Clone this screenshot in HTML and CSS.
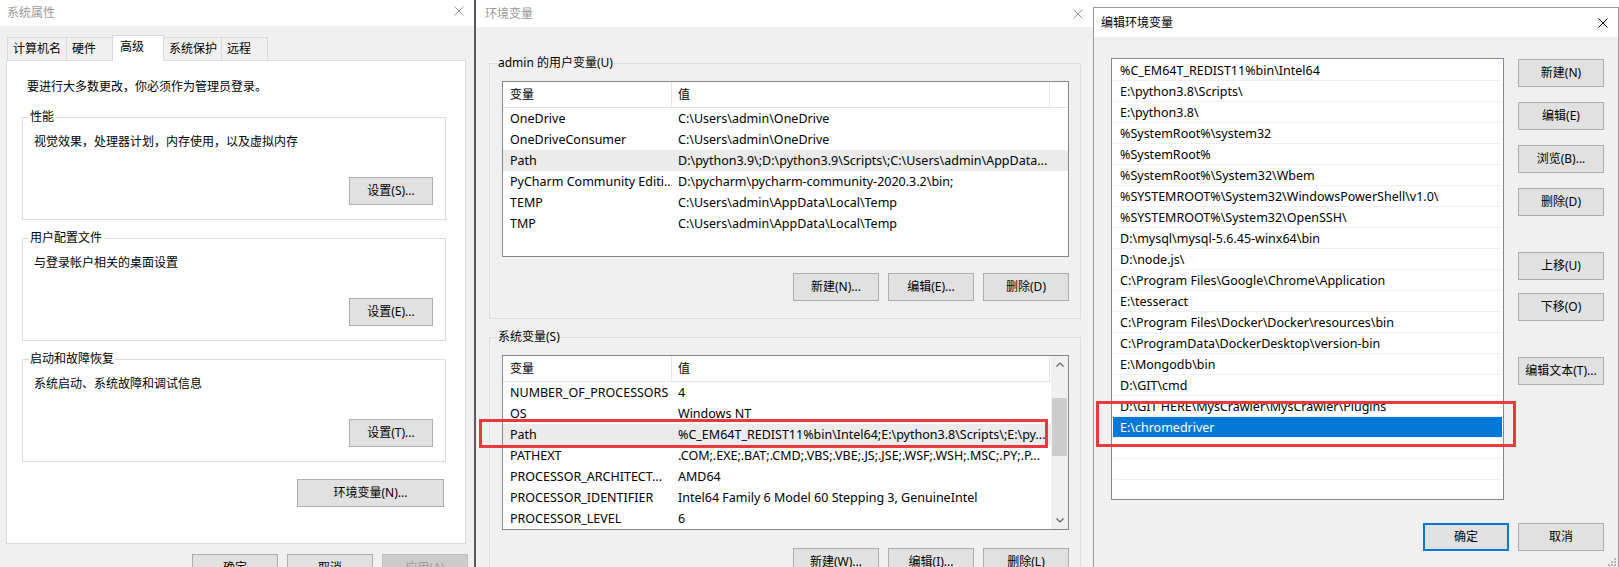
FILE: index.html
```html
<!DOCTYPE html>
<html lang="zh-CN">
<head>
    <meta charset="UTF-8">
    <meta name="viewport" content="width=device-width, initial-scale=1.0">
    <title>环境变量</title>
    <link rel="stylesheet" href="styles.css">
</head>
<body>
<div class="desktop">

    <!-- 系统属性 -->
    <div class="window win-sys">
        <div class="titlebar inactive">
            <span>系统属性</span>
            <svg class="close close-up" viewBox="0 0 10 10"><path d="M0.5 0.5L9.5 9.5M9.5 0.5L0.5 9.5" stroke="currentColor" stroke-width="1" fill="none"/></svg>
        </div>
        <div class="sys-body">
            <div class="tabs">
                <div class="tab" style="width:60px">计算机名</div>
                <div class="tab" style="width:47px">硬件</div>
                <div class="tab active" style="width:52px">高级</div>
                <div class="tab" style="width:59px">系统保护</div>
                <div class="tab" style="width:47px">远程</div>
            </div>
            <div class="tab-panel">
                <p class="intro">要进行大多数更改，你必须作为管理员登录。</p>

                <div class="group">
                    <div class="group-title">性能</div>
                    <p class="group-desc">视觉效果，处理器计划，内存使用，以及虚拟内存</p>
                    <div class="group-actions"><button class="btn btn-narrow">设置(S)...</button></div>
                </div>

                <div class="group">
                    <div class="group-title">用户配置文件</div>
                    <p class="group-desc">与登录帐户相关的桌面设置</p>
                    <div class="group-actions"><button class="btn btn-narrow">设置(E)...</button></div>
                </div>

                <div class="group">
                    <div class="group-title">启动和故障恢复</div>
                    <p class="group-desc">系统启动、系统故障和调试信息</p>
                    <div class="group-actions"><button class="btn btn-narrow">设置(T)...</button></div>
                </div>

                <div class="panel-actions"><button class="btn btn-env">环境变量(N)...</button></div>
            </div>
            <div class="dlg-actions">
                <button class="btn">确定</button>
                <button class="btn">取消</button>
                <button class="btn" disabled>应用(A)</button>
            </div>
        </div>
    </div>

    <!-- 环境变量 -->
    <div class="window win-env">
        <div class="titlebar inactive">
            <span>环境变量</span>
            <svg class="close" viewBox="0 0 10 10"><path d="M0.5 0.5L9.5 9.5M9.5 0.5L0.5 9.5" stroke="currentColor" stroke-width="1" fill="none"/></svg>
        </div>
        <div class="env-body">
            <div class="group env-group">
                <div class="group-title">admin 的用户变量(U)</div>
                <div class="list list-user">
                    <div class="list-head">
                        <div class="head-cell cell-name">变量</div>
                        <div class="head-cell cell-value">值</div>
                    </div>
                    <div class="list-row"><div class="cell-name">OneDrive</div><div class="cell-value">C:\Users\admin\OneDrive</div></div>
                    <div class="list-row"><div class="cell-name">OneDriveConsumer</div><div class="cell-value">C:\Users\admin\OneDrive</div></div>
                    <div class="list-row hot"><div class="cell-name">Path</div><div class="cell-value">D:\python3.9\;D:\python3.9\Scripts\;C:\Users\admin\AppData...</div></div>
                    <div class="list-row"><div class="cell-name">PyCharm Community Editi...</div><div class="cell-value">D:\pycharm\pycharm-community-2020.3.2\bin;</div></div>
                    <div class="list-row"><div class="cell-name">TEMP</div><div class="cell-value">C:\Users\admin\AppData\Local\Temp</div></div>
                    <div class="list-row"><div class="cell-name">TMP</div><div class="cell-value">C:\Users\admin\AppData\Local\Temp</div></div>
                </div>
                <div class="btn-row">
                    <button class="btn">新建(N)...</button>
                    <button class="btn">编辑(E)...</button>
                    <button class="btn">删除(D)</button>
                </div>
            </div>

            <div class="group env-group env-group-sys">
                <div class="group-title">系统变量(S)</div>
                <div class="list list-sys">
                    <div class="list-main">
                        <div class="list-head">
                            <div class="head-cell cell-name">变量</div>
                            <div class="head-cell cell-value">值</div>
                        </div>
                        <div class="list-row"><div class="cell-name">NUMBER_OF_PROCESSORS</div><div class="cell-value">4</div></div>
                        <div class="list-row"><div class="cell-name">OS</div><div class="cell-value">Windows NT</div></div>
                        <div class="list-row hot"><div class="cell-name">Path</div><div class="cell-value">%C_EM64T_REDIST11%bin\Intel64;E:\python3.8\Scripts\;E:\py...</div></div>
                        <div class="list-row"><div class="cell-name">PATHEXT</div><div class="cell-value">.COM;.EXE;.BAT;.CMD;.VBS;.VBE;.JS;.JSE;.WSF;.WSH;.MSC;.PY;.P...</div></div>
                        <div class="list-row"><div class="cell-name">PROCESSOR_ARCHITECT...</div><div class="cell-value">AMD64</div></div>
                        <div class="list-row"><div class="cell-name">PROCESSOR_IDENTIFIER</div><div class="cell-value">Intel64 Family 6 Model 60 Stepping 3, GenuineIntel</div></div>
                        <div class="list-row"><div class="cell-name">PROCESSOR_LEVEL</div><div class="cell-value">6</div></div>
                    </div>
                    <div class="scrollbar">
                        <div class="sb-btn"><svg width="8" height="5" viewBox="0 0 8 5"><path d="M0.5 4.5L4 1L7.5 4.5" stroke="#606060" stroke-width="1.2" fill="none"/></svg></div>
                        <div class="sb-thumb"></div>
                        <div class="sb-track"></div>
                        <div class="sb-btn"><svg width="8" height="5" viewBox="0 0 8 5"><path d="M0.5 0.5L4 4L7.5 0.5" stroke="#606060" stroke-width="1.2" fill="none"/></svg></div>
                    </div>
                </div>
                <div class="btn-row">
                    <button class="btn">新建(W)...</button>
                    <button class="btn">编辑(I)...</button>
                    <button class="btn">删除(L)</button>
                </div>
            </div>
        </div>
    </div>

    <!-- 编辑环境变量 -->
    <div class="window win-edit">
        <div class="titlebar">
            <span>编辑环境变量</span>
            <svg class="close" viewBox="0 0 10 10"><path d="M0.5 0.5L9.5 9.5M9.5 0.5L0.5 9.5" stroke="currentColor" stroke-width="1" fill="none"/></svg>
        </div>
        <div class="edit-body">
            <div class="edit-main">
                <div class="path-list">
                    <div class="path-row">%C_EM64T_REDIST11%bin\Intel64</div>
                    <div class="path-row">E:\python3.8\Scripts\</div>
                    <div class="path-row">E:\python3.8\</div>
                    <div class="path-row">%SystemRoot%\system32</div>
                    <div class="path-row">%SystemRoot%</div>
                    <div class="path-row">%SystemRoot%\System32\Wbem</div>
                    <div class="path-row">%SYSTEMROOT%\System32\WindowsPowerShell\v1.0\</div>
                    <div class="path-row">%SYSTEMROOT%\System32\OpenSSH\</div>
                    <div class="path-row">D:\mysql\mysql-5.6.45-winx64\bin</div>
                    <div class="path-row">D:\node.js\</div>
                    <div class="path-row">C:\Program Files\Google\Chrome\Application</div>
                    <div class="path-row">E:\tesseract</div>
                    <div class="path-row">C:\Program Files\Docker\Docker\resources\bin</div>
                    <div class="path-row">C:\ProgramData\DockerDesktop\version-bin</div>
                    <div class="path-row">E:\Mongodb\bin</div>
                    <div class="path-row">D:\GIT\cmd</div>
                    <div class="path-row">D:\GIT HERE\MysCrawler\MysCrawler\Plugins</div>
                    <div class="path-row selected">E:\chromedriver</div>
                    <div class="path-row"></div>
                    <div class="path-row"></div>
                </div>
                <div class="side-buttons">
                    <button class="btn">新建(N)</button>
                    <button class="btn">编辑(E)</button>
                    <button class="btn">浏览(B)...</button>
                    <button class="btn">删除(D)</button>
                    <button class="btn sep">上移(U)</button>
                    <button class="btn tight">下移(O)</button>
                    <button class="btn sep">编辑文本(T)...</button>
                </div>
            </div>
            <div class="edit-footer">
                <button class="btn btn-default">确定</button>
                <button class="btn">取消</button>
            </div>
        </div>
        <svg class="grip" width="10" height="10" viewBox="0 0 10 10">
            <rect x="8" y="2" width="2" height="2" fill="#b4b4b4"/>
            <rect x="5" y="5" width="2" height="2" fill="#b4b4b4"/>
            <rect x="8" y="5" width="2" height="2" fill="#b4b4b4"/>
            <rect x="2" y="8" width="2" height="2" fill="#b4b4b4"/>
            <rect x="5" y="8" width="2" height="2" fill="#b4b4b4"/>
            <rect x="8" y="8" width="2" height="2" fill="#b4b4b4"/>
        </svg>
    </div>

    <!-- 红框标注 -->
    <div class="mark mark-path"></div>
    <div class="mark mark-driver"></div>
</div>
</body>
</html>
```

FILE: styles.css
```css
* {
    box-sizing: border-box;
}
html, body {
    margin: 0;
}
body {
    width: 1619px;
    height: 567px;
    overflow: hidden;
    background: #fff;
    font-family: "Noto Sans", "Noto Sans CJK SC", sans-serif;
    font-size: 12px;
    line-height: 16px;
    color: #000;
}
.desktop {
    position: relative;
    width: 1619px;
    height: 567px;
}
.window {
    position: absolute;
    background: #f0f0f0;
    overflow: hidden;
}
.win-sys {
    left: 0;
    top: 0;
    width: 474px;
    height: 600px;
}
.win-env {
    left: 474px;
    top: 0;
    width: 619px;
    height: 600px;
    border-left: 2px solid #5a5a5a;
}
.win-edit {
    left: 1093px;
    top: 7px;
    width: 526px;
    height: 561px;
    border: 1px solid #9b9b9b;
}

/* title bars */
.titlebar {
    display: flex;
    align-items: center;
    justify-content: space-between;
    height: 26px;
    padding: 0 10px 0 7px;
    background: #fff;
}
.titlebar.inactive {
    color: #9a9a9a;
}
.win-env .titlebar {
    height: 27px;
    padding-left: 9px;
}
.win-edit .titlebar {
    height: 29px;
}
.close {
    width: 10px;
    height: 10px;
    flex: none;
}
.close-up {
    margin-top: -5px;
}

/* buttons */
.btn {
    width: 86px;
    height: 28px;
    padding: 0;
    border: 1px solid #adadad;
    background: #e1e1e1;
    font: inherit;
    color: #000;
    flex: none;
}
.btn:disabled {
    background: #cccccc;
    border-color: #bfbfbf;
    color: #9d9d9d;
}
.btn-narrow {
    width: 84px;
}
.btn-env {
    width: 147px;
    margin-right: 2px;
}
.btn-default {
    border: 2px solid #0078d7;
}

/* 系统属性 */
.sys-body {
    padding: 9px 8px 0 6px;
}
.tabs {
    display: flex;
    align-items: flex-end;
    height: 25px;
    margin-left: 1px;
}
.tab {
    height: 23px;
    padding: 3px 0 0 5px;
    border: 1px solid #d9d9d9;
    border-bottom: none;
    background: #f0f0f0;
    white-space: nowrap;
}
.tab + .tab {
    margin-left: -1px;
}
.tab.active {
    position: relative;
    z-index: 1;
    height: 26px;
    margin-bottom: -1px;
    padding-left: 7px;
    background: #fff;
}
.tab-panel {
    height: 484px;
    padding: 18px 19px 0 15px;
    background: #fff;
    border: 1px solid #d9d9d9;
}
.intro {
    margin: 0;
    padding-left: 5px;
}
.group {
    border: 1px solid #dcdcdc;
    padding: 0 12px 14px 11px;
    margin-top: 18px;
}
.intro + .group {
    margin-top: 22px;
}
.group-title {
    width: fit-content;
    margin: -9px 0 0 -5px;
    padding: 0 1px;
    background: #fff;
    white-space: nowrap;
}
.group-desc {
    margin: 9px 0 0;
}
.group-actions {
    display: flex;
    justify-content: flex-end;
    margin-top: 27px;
}
.panel-actions {
    display: flex;
    justify-content: flex-end;
    margin-top: 17px;
}
.dlg-actions {
    display: flex;
    justify-content: flex-end;
    gap: 9px;
    margin: 10px -2px 0 0;
}

/* 环境变量 */
.env-body {
    padding: 36px 12px 0 13px;
}
.env-group {
    margin-top: 0;
    padding: 0 11px 17px 12px;
}
.env-group + .env-group {
    margin-top: 18px;
}
.env-group .group-title {
    background: #f0f0f0;
}
.list {
    margin-top: 10px;
    border: 1px solid #828790;
    background: #fff;
    overflow: hidden;
}
.list-user {
    height: 176px;
}
.list-sys {
    height: 175px;
    display: flex;
}
.list-main {
    flex: 1;
    min-width: 0;
    overflow: hidden;
}
.list-head {
    display: flex;
    height: 26px;
    border-bottom: 1px solid #e5e5e5;
}
.head-cell {
    line-height: 25px;
    border-right: 1px solid #e5e5e5;
}
.cell-name {
    width: 169px;
    flex: none;
    padding-left: 7px;
    overflow: hidden;
    white-space: nowrap;
}
.list-head .cell-value {
    width: 378px;
    flex: none;
}
.cell-value {
    flex: 1;
    min-width: 0;
    padding-left: 6px;
    overflow: hidden;
    white-space: nowrap;
}
.list-row {
    display: flex;
    height: 21px;
    line-height: 21px;
    font-size: 12.5px;
}
.list-row.hot {
    background: #ebebeb;
}
.scrollbar {
    width: 17px;
    flex: none;
    display: flex;
    flex-direction: column;
    background: #f0f0f0;
}
.sb-btn {
    height: 17px;
    display: flex;
    align-items: center;
    justify-content: center;
}
.sb-thumb {
    height: 58px;
    margin: 25px 1px 0;
    background: #cdcdcd;
}
.sb-track {
    flex: 1;
}
.btn-row {
    display: flex;
    justify-content: flex-end;
    gap: 9px;
    margin-top: 16px;
}
.env-group-sys .btn-row {
    margin-top: 18px;
}

/* 编辑环境变量 */
.edit-body {
    padding: 21px 14px 0 17px;
}
.edit-main {
    display: flex;
    gap: 14px;
}
.path-list {
    width: 393px;
    height: 442px;
    padding: 1px 1px 0;
    border: 1px solid #828790;
    background: #fff;
    overflow: hidden;
}
.path-row {
    height: 21px;
    padding-left: 7px;
    border-bottom: 1px solid #f0f0f0;
    line-height: 22px;
    font-size: 12.5px;
    white-space: nowrap;
    overflow: hidden;
}
.path-row.selected {
    background: #0078d7;
    color: #fff;
}
.side-buttons {
    display: flex;
    flex-direction: column;
    padding-top: 1px;
}
.side-buttons .btn + .btn {
    margin-top: 15px;
}
.side-buttons .btn.sep {
    margin-top: 36px;
}
.side-buttons .btn.tight {
    margin-top: 13px;
}
.edit-footer {
    display: flex;
    justify-content: flex-end;
    gap: 9px;
    margin-top: 23px;
}
.grip {
    position: absolute;
    right: 2px;
    bottom: 1px;
}

/* 红框标注 */
.mark {
    position: absolute;
    z-index: 5;
    border: 3px solid #f0383c;
}
.mark-path {
    left: 479px;
    top: 419px;
    width: 569px;
    height: 29px;
}
.mark-driver {
    left: 1096px;
    top: 401px;
    width: 420px;
    height: 46px;
}
```
